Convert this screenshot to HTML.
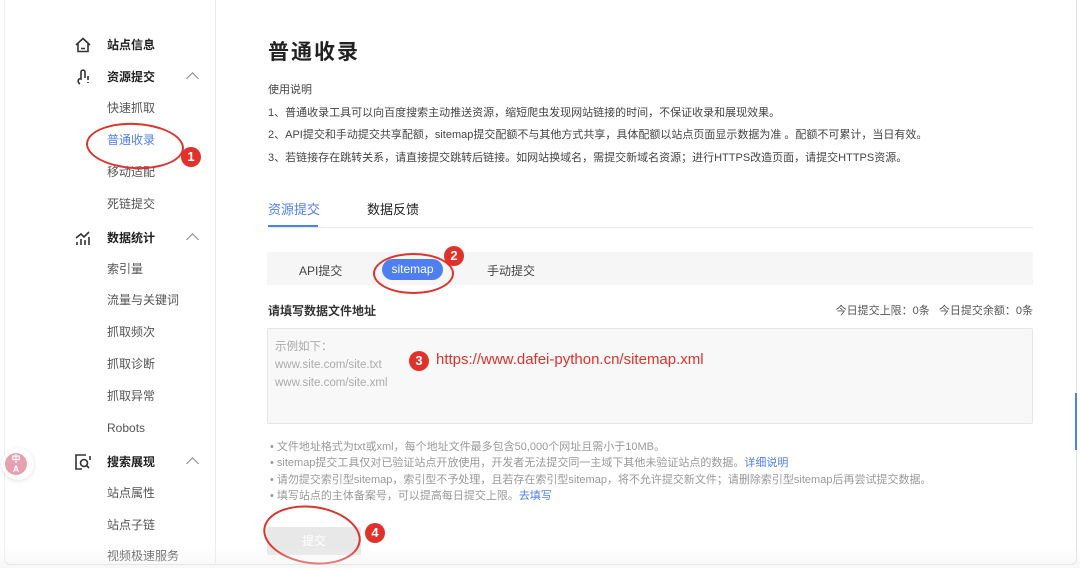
<!DOCTYPE html>
<html><head><meta charset="utf-8">
<style>
*{margin:0;padding:0;box-sizing:border-box}
body{width:1080px;height:568px;background:#fff;font-family:"Liberation Sans","Noto Sans CJK SC",sans-serif;position:relative;overflow:hidden;color:#333}
.frame{position:absolute;left:4px;top:0;width:1073px;height:565px;border-right:1px solid #e3e3e3;border-bottom:1px solid #ddd;border-left:1px solid #eee;border-radius:0 0 6px 6px}
.side{position:absolute;left:5px;top:0;width:211px;height:565px;border-right:1px solid #ececec}
.it{position:absolute;left:107px;font-size:12px;color:#555;line-height:16px;white-space:nowrap}
.it.h{font-weight:bold;color:#222}
.it.a{color:#4e7ff0}
.chev{position:absolute;left:188px;width:9px;height:9px;border-left:1.3px solid #888;border-top:1.3px solid #888;transform:rotate(45deg)}
.ico{position:absolute;left:74px}
.abs{position:absolute;white-space:nowrap}
.red{position:absolute;border:2px solid #e0312a;border-radius:50%}
.num{position:absolute;width:20px;height:20px;border-radius:50%;background:#e0312a;color:#fff;font-size:13px;font-weight:bold;text-align:center;line-height:20px}
.note{position:absolute;left:270px;font-size:11px;color:#999;white-space:nowrap}
.note b{font-weight:normal;color:#4e7ff0}
.p{font-size:11px;color:#444}
</style></head><body>
<div class="frame"></div>
<div class="side"></div>
<div style="position:absolute;left:1075px;top:393px;width:2px;height:57px;background:#4e7ff0"></div>

<svg class="ico" style="top:36px" width="18" height="18" viewBox="0 0 18 18" fill="none" stroke="#333" stroke-width="1.6"><path d="M2 9 L9 2.5 L16 9 M4 7.5 V15.5 H14 V7.5 M7 12.5 H11"/></svg>
<svg class="ico" style="top:68px" width="18" height="18" viewBox="0 0 18 18" fill="none" stroke="#333" stroke-width="1.6"><path d="M6 16 C3 14 4 10 7 11 V4 C7 1.5 11 1.5 11 4 V10 M14 8 V12 M14 14 V15"/></svg>
<svg class="ico" style="top:229px" width="18" height="18" viewBox="0 0 18 18" fill="none" stroke="#333" stroke-width="1.6"><path d="M2 9 L7 5 L10 8 L15 3 M3 16 V13 M7 16 V10 M11 16 V11 M15 16 V8"/></svg>
<svg class="ico" style="top:453px" width="18" height="18" viewBox="0 0 18 18" fill="none" stroke="#333" stroke-width="1.6"><path d="M12 2 H2 V16 H8"/><circle cx="10" cy="10" r="3.5"/><path d="M12.5 12.5 L15 15 M16 3 V7"/></svg>

<div class="it h" style="top:37px">站点信息</div>
<div class="it h" style="top:69px">资源提交</div><div class="chev" style="top:74px"></div>
<div class="it" style="top:100px">快速抓取</div>
<div class="it a" style="top:132px">普通收录</div>
<div class="it" style="top:164px">移动适配</div>
<div class="it" style="top:196px">死链提交</div>
<div class="it h" style="top:230px">数据统计</div><div class="chev" style="top:235px"></div>
<div class="it" style="top:261px">索引量</div>
<div class="it" style="top:292px">流量与关键词</div>
<div class="it" style="top:324px">抓取频次</div>
<div class="it" style="top:356px">抓取诊断</div>
<div class="it" style="top:388px">抓取异常</div>
<div class="it" style="top:420px">Robots</div>
<div class="it h" style="top:454px">搜索展现</div><div class="chev" style="top:459px"></div>
<div class="it" style="top:485px">站点属性</div>
<div class="it" style="top:517px">站点子链</div>
<div class="it" style="top:548px">视频极速服务</div>

<div style="position:absolute;left:2px;top:448px;width:32px;height:32px;border-radius:16px;background:#fff;box-shadow:0 1px 4px rgba(0,0,0,.12)"></div>
<div style="position:absolute;left:5px;top:453px;width:22px;height:22px;border-radius:50%;background:#e8a0b0;color:#fff;font-size:9px;line-height:10px;text-align:center;padding-top:1px;font-weight:bold">中<br>A</div>

<div class="red" style="left:86px;top:123px;width:98px;height:46px;transform:rotate(3deg)"></div>
<div class="num" style="left:181px;top:147px">1</div>

<div class="abs" style="left:268px;top:36px;font-size:21px;font-weight:bold;color:#222;letter-spacing:2px">普通收录</div>
<div class="abs p" style="left:268px;top:81px">使用说明</div>
<div class="abs p" style="left:268px;top:104px">1、普通收录工具可以向百度搜索主动推送资源，缩短爬虫发现网站链接的时间，不保证收录和展现效果。</div>
<div class="abs p" style="left:268px;top:126px">2、API提交和手动提交共享配额，sitemap提交配额不与其他方式共享，具体配额以站点页面显示数据为准 。配额不可累计，当日有效。</div>
<div class="abs p" style="left:268px;top:149px">3、若链接存在跳转关系，请直接提交跳转后链接。如网站换域名，需提交新域名资源；进行HTTPS改造页面，请提交HTTPS资源。</div>

<div class="abs" style="left:268px;top:199px;font-size:13px;color:#4e7ff0">资源提交</div>
<div class="abs" style="left:367px;top:199px;font-size:13px;color:#222">数据反馈</div>
<div style="position:absolute;left:268px;top:227px;width:765px;height:1px;background:#eaeaea"></div>
<div style="position:absolute;left:268px;top:225px;width:50px;height:2px;background:#4e7ff0"></div>

<div style="position:absolute;left:267px;top:252px;width:766px;height:33px;background:#f6f6f6"></div>
<div class="abs" style="left:299px;top:262px;font-size:12px;color:#444">API提交</div>
<div style="position:absolute;left:382px;top:259px;width:61px;height:21px;border-radius:11px;background:#4e7ff0;color:#fff;font-size:12px;text-align:center;line-height:21px">sitemap</div>
<div class="abs" style="left:487px;top:262px;font-size:12px;color:#444">手动提交</div>
<div class="red" style="left:373px;top:253px;width:81px;height:41px"></div>
<div class="num" style="left:444px;top:246px">2</div>

<div class="abs" style="left:268px;top:302px;font-size:12px;color:#333;font-weight:bold">请填写数据文件地址</div>
<div class="abs" style="left:813px;top:302px;font-size:11px;color:#555;width:220px;text-align:right">今日提交上限：0条&nbsp;&nbsp;&nbsp;今日提交余额：0条</div>

<div style="position:absolute;left:267px;top:328px;width:766px;height:96px;background:#f8f8f8;border:1px solid #e6e6e6;border-radius:2px"></div>
<div class="abs" style="left:275px;top:338px;font-size:11.5px;color:#aaa;line-height:18px">示例如下：<br>www.site.com/site.txt<br>www.site.com/site.xml</div>
<div class="num" style="left:409px;top:351px">3</div>
<div class="abs" style="left:436px;top:351px;font-size:15px;color:#e0312a">https://www.dafei-python.cn/sitemap.xml</div>

<div class="note" style="top:438px">• 文件地址格式为txt或xml，每个地址文件最多包含50,000个网址且需小于10MB。</div>
<div class="note" style="top:454px">• sitemap提交工具仅对已验证站点开放使用，开发者无法提交同一主域下其他未验证站点的数据。<b>详细说明</b></div>
<div class="note" style="top:471px">• 请勿提交索引型sitemap，索引型不予处理，且若存在索引型sitemap，将不允许提交新文件；请删除索引型sitemap后再尝试提交数据。</div>
<div class="note" style="top:487px">• 填写站点的主体备案号，可以提高每日提交上限。<b>去填写</b></div>

<div style="position:absolute;left:267px;top:527px;width:94px;height:28px;background:#e8e8e8;color:#fff;font-size:12px;text-align:center;line-height:28px;border-radius:2px">提交</div>
<div class="red" style="left:263px;top:506px;width:98px;height:58px;transform:rotate(8deg)"></div>
<div class="num" style="left:365px;top:523px">4</div>
<div style="position:absolute;left:0;top:545px;width:1080px;height:23px;background:linear-gradient(rgba(255,255,255,0),rgba(240,240,240,.5))"></div>
</body></html>
